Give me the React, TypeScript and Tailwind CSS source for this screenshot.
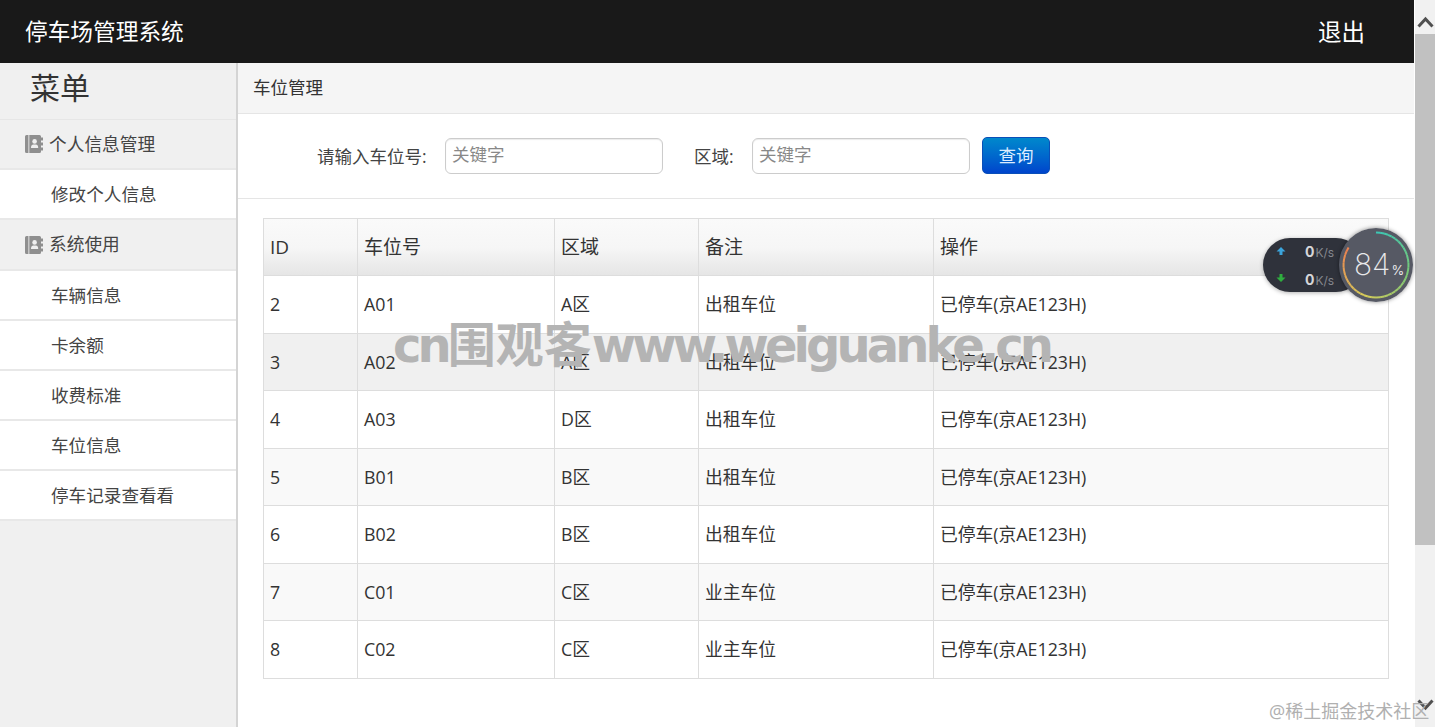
const FONT = "font-['Open_Sans','Noto_Sans_CJK_SC',sans-serif]";

const rows = [
  { id: 2, no: "A01", area: "A区", note: "出租车位", bg: "bg-white", cell: "" },
  { id: 3, no: "A02", area: "A区", note: "出租车位", bg: "bg-[#f0f0f0]", cell: "pt-[2px]" },
  { id: 4, no: "A03", area: "D区", note: "出租车位", bg: "bg-white", cell: "" },
  { id: 5, no: "B01", area: "B区", note: "出租车位", bg: "bg-[#f9f9f9]", cell: "pt-[2px]" },
  { id: 6, no: "B02", area: "B区", note: "出租车位", bg: "bg-white", cell: "" },
  { id: 7, no: "C01", area: "C区", note: "业主车位", bg: "bg-[#f9f9f9]", cell: "pt-[2px]" },
  { id: 8, no: "C02", area: "C区", note: "业主车位", bg: "bg-white", cell: "" },
];

const menu = [
  { label: "个人信息管理", group: true, tall: false },
  { label: "修改个人信息" },
  { label: "系统使用", group: true, tall: true },
  { label: "车辆信息" },
  { label: "卡余额" },
  { label: "收费标准" },
  { label: "车位信息" },
  { label: "停车记录查看看" },
];

// contact book icon in the menu groups
function BookIcon() {
  return (
    <svg width="18" height="18" viewBox="0 0 18 18" className="shrink-0">
      <path d="M0 1.5 A1.5 1.5 0 0 1 1.5 0 H14.5 A1.5 1.5 0 0 1 16 1.5 V16.5 A1.5 1.5 0 0 1 14.5 18 H1.5 A1.5 1.5 0 0 1 0 16.5 Z" fill="#8f8f8f" />
      <rect x="3.2" y="0" width="1.2" height="18" fill="#d4d4d4" />
      <circle cx="9.6" cy="6.4" r="2.3" fill="#f0f0f0" />
      <path d="M6 13 C6 10 7.5 9.6 9.6 9.6 C11.7 9.6 13.2 10 13.2 13 Z" fill="#f0f0f0" />
      <rect x="16" y="2.5" width="2" height="3" fill="#8f8f8f" />
      <rect x="16" y="7.5" width="2" height="3" fill="#8f8f8f" />
      <rect x="16" y="12.5" width="2" height="3" fill="#8f8f8f" />
    </svg>
  );
}

// ring of the speed widget, colour runs teal > green > yellow > orange
function Ring() {
  const stops = [
    [61, 199, 180],
    [120, 200, 120],
    [215, 205, 90],
    [235, 130, 80],
  ];
  const segs = Array.from({ length: 42 }, (_, i) => {
    const a0 = (i / 42) * 0.84 * 2 * Math.PI;
    const a1 = ((i + 1) / 42) * 0.84 * 2 * Math.PI;
    const t = (i / 41) * 3;
    const k = Math.min(Math.floor(t), 2);
    const f = t - k;
    const c = stops[k].map((v, j) => Math.round(v + (stops[k + 1][j] - v) * f));
    return {
      x0: 37 + 32.5 * Math.sin(a0),
      y0: 37 - 32.5 * Math.cos(a0),
      x1: 37 + 32.5 * Math.sin(a1),
      y1: 37 - 32.5 * Math.cos(a1),
      color: `rgb(${c[0]},${c[1]},${c[2]})`,
    };
  });
  return (
    <svg width="74" height="74" viewBox="0 0 74 74" className="absolute left-0 top-0">
      <circle cx="37" cy="37" r="37" fill="#565964" />
      {segs.map((s, i) => (
        <line key={i} x1={s.x0} y1={s.y0} x2={s.x1} y2={s.y1} stroke={s.color} strokeWidth="2" />
      ))}
    </svg>
  );
}

function SpeedWidget() {
  return (
    <div className="absolute left-[1263px] top-[228px] h-[74px] w-[152px]">
      <div className="absolute left-0 top-[10px] h-[54px] w-[100px] rounded-[27px] bg-[#2f323b] shadow-[0_1px_4px_rgba(0,0,0,0.3)]">
        <svg width="10" height="10" viewBox="0 0 10 10" className="absolute left-[13px] top-[8px]">
          <path d="M5 1 L9.5 5.5 H6.5 V9 H3.5 V5.5 H0.5 Z" fill="#3ba4dc" />
        </svg>
        <svg width="10" height="10" viewBox="0 0 10 10" className="absolute left-[13px] top-[35px]">
          <path d="M5 9 L9.5 4.5 H6.5 V1 H3.5 V4.5 H0.5 Z" fill="#2fae3f" />
        </svg>
        <div className="absolute left-[42px] top-[3px] flex h-[20px] items-baseline font-['Inter',sans-serif] text-[14px] font-bold text-[#d6d6d8]">
          0<span className="ml-px text-[12px] font-normal text-[#85878e]">K/s</span>
        </div>
        <div className="absolute left-[42px] top-[31px] flex h-[20px] items-baseline font-['Inter',sans-serif] text-[14px] font-bold text-[#d6d6d8]">
          0<span className="ml-px text-[12px] font-normal text-[#85878e]">K/s</span>
        </div>
      </div>
      <div className="absolute left-[76px] top-0 h-[74px] w-[74px] rounded-full shadow-[0_0_4px_rgba(0,0,0,0.45)]">
        <Ring />
        <div className="absolute left-[15px] top-[16px] flex items-baseline font-['Inter',sans-serif] text-[30px] leading-[40px] font-extralight text-[#e8e8ea]">
          84<span className="ml-px text-[13px] font-normal">%</span>
        </div>
      </div>
    </div>
  );
}

function Scrollbar() {
  return (
    <div className="flex w-[21px] flex-col border-l border-white bg-[#f1f1f1]">
      <div className="flex h-[34px] items-center justify-center pt-[10px]">
        <svg width="17" height="12" viewBox="0 0 17 12">
          <path d="M1.5 10.5 L8.5 3 L15.5 10.5" fill="none" stroke="#505050" strokeWidth="3" />
        </svg>
      </div>
      <div className="h-[511px] bg-[#c1c1c1]" />
      <div className="flex-1" />
      <div className="flex h-[34px] items-center justify-center pb-[10px]">
        <svg width="17" height="12" viewBox="0 0 17 12">
          <path d="M1.5 1.5 L8.5 9 L15.5 1.5" fill="none" stroke="#505050" strokeWidth="3" />
        </svg>
      </div>
    </div>
  );
}

export default function App() {
  return (
    <div className={`relative flex h-[727px] w-[1435px] overflow-hidden bg-white text-[#333] ${FONT}`}>
      <div className="flex w-[1414px] flex-col">
        {/* Header */}
        <div className="flex h-[63px] items-center justify-between bg-[#191919] pl-[25px] pr-[49px] pt-[2px] text-white">
          <div className="text-[22.7px]">停车场管理系统</div>
          <div className="text-[23.5px]">退出</div>
        </div>

        <div className="flex flex-1">
          {/* Sidebar */}
          <div className="w-[238px] border-r-2 border-[#d4d4d4] bg-[#f0f0f0]">
            <div className="h-[57px] border-b border-[#e6e6e6] pl-[30px] text-[30px] leading-[50px]">菜单</div>
            {menu.map((m) =>
              m.group ? (
                <div
                  key={m.label}
                  className={`flex items-center gap-[6px] border-b-2 border-[#e8e8e8] pl-[25px] text-[17.7px] text-[#444] ${m.tall ? "h-[51px]" : "h-[50px]"}`}
                >
                  <BookIcon />
                  {m.label}
                </div>
              ) : (
                <div key={m.label} className="flex h-[50px] items-center border-b-2 border-[#e8e8e8] bg-white pl-[51px] text-[17.6px] text-[#444]">
                  {m.label}
                </div>
              ),
            )}
          </div>

          {/* Content */}
          <div className="flex-1">
            <div className="flex h-[51px] items-center border-b border-[#e5e5e5] bg-[#f5f5f5] pb-[2px] pl-[15px] text-[17.5px]">车位管理</div>
            <div className="flex h-[85px] items-center border-b border-[#e5e5e5] pb-[1px]">
              <span className="ml-[79px] w-[128px] pt-[1px] text-[17.5px] text-[#444]">请输入车位号:</span>
              <input
                placeholder="关键字"
                className="h-[36px] w-[218px] rounded-[6px] border border-[#ccc] px-[6px] pb-[3px] text-[17.5px] shadow-[inset_0_1px_1px_rgba(0,0,0,0.08)] placeholder:text-[#888]"
              />
              <span className="ml-[31px] w-[58px] pt-[1px] text-[17.5px] text-[#444]">区域:</span>
              <input
                placeholder="关键字"
                className="h-[36px] w-[218px] rounded-[6px] border border-[#ccc] px-[6px] pb-[3px] text-[17.5px] shadow-[inset_0_1px_1px_rgba(0,0,0,0.08)] placeholder:text-[#888]"
              />
              <button className="ml-[12px] h-[37px] w-[68px] rounded-[5px] border border-[#0a4fb8] bg-gradient-to-b from-[#0088cc] to-[#0044cc] text-[17.5px] text-[#dcecff]">
                查询
              </button>
            </div>

            <table className="ml-[25px] mt-[19px] w-[1125px] table-fixed border-collapse text-[17.8px]">
              <colgroup>
                <col className="w-[94px]" />
                <col className="w-[197px]" />
                <col className="w-[144px]" />
                <col className="w-[235px]" />
                <col className="w-[455px]" />
              </colgroup>
              <thead>
                <tr className="h-[57px] bg-gradient-to-b from-[#fafafa] via-[#f6f6f6] to-[#e5e5e5] text-[19px]">
                  {["ID", "车位号", "区域", "备注", "操作"].map((h) => (
                    <th key={h} className="border border-[#ddd] pl-[6px] text-left font-normal">
                      {h}
                    </th>
                  ))}
                </tr>
              </thead>
              <tbody>
                {rows.map((r) => (
                  <tr key={r.id} className={`h-[57.5px] ${r.bg}`}>
                    <td className={`border border-[#ddd] pl-[6px] ${r.cell}`}>{r.id}</td>
                    <td className={`border border-[#ddd] pl-[6px] ${r.cell}`}>{r.no}</td>
                    <td className={`border border-[#ddd] pl-[6px] ${r.cell}`}>{r.area}</td>
                    <td className={`border border-[#ddd] pl-[6px] ${r.cell}`}>{r.note}</td>
                    <td className={`border border-[#ddd] pl-[6px] ${r.cell}`}>已停车(京AE123H)</td>
                  </tr>
                ))}
              </tbody>
            </table>
          </div>
        </div>
      </div>

      <Scrollbar />

      <SpeedWidget />

      {/* Watermarks */}
      <div className="absolute left-[393px] top-[317px] whitespace-nowrap font-['DejaVu_Sans','Noto_Sans_CJK_SC',sans-serif] text-[48px] leading-[56px] font-bold tracking-[-3.9px] text-[#b4b4b4]">
        cn<span className="tracking-[0px]">围观客</span>www.weiguanke.cn
      </div>
      <div className="absolute left-[1269px] top-[698px] whitespace-nowrap text-[18px] text-[#b0b0b0]">@稀土掘金技术社区</div>
    </div>
  );
}
